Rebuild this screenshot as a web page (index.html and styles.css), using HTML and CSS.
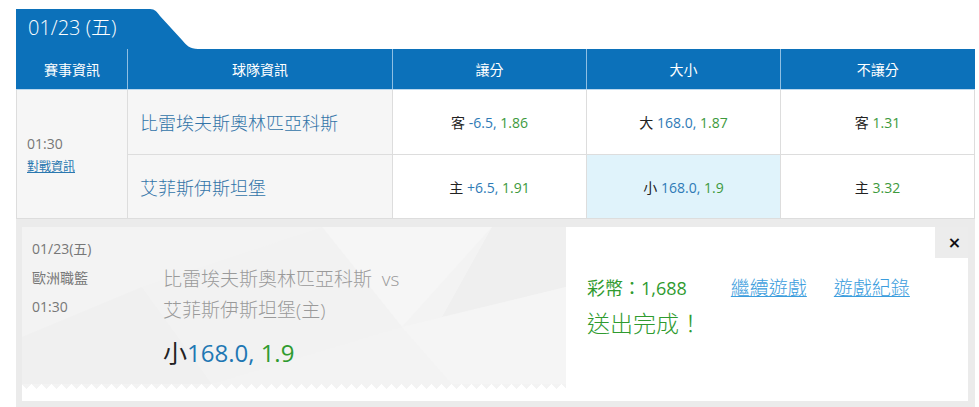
FILE: index.html
```html
<!DOCTYPE html>
<html lang="zh-Hant">
<head>
<meta charset="utf-8">
<title>01/23 (五)</title>
<link rel="stylesheet" href="styles.css">
</head>
<body>
<div class="page">
  <div class="tabrow">
    <div class="tab">01/23 (五)</div>
    <svg class="tab-curve" width="48" height="40" viewBox="0 0 48 40"><path d="M0 0 C5 0 7 3 10 7 L32 31 C36 36 40 40 48 40 H0 Z" fill="#0c71ba"/></svg>
  </div>
  <table class="odds">
    <colgroup>
      <col class="c-info"><col class="c-team"><col class="c-odd"><col class="c-odd"><col class="c-odd">
    </colgroup>
    <thead>
      <tr><th>賽事資訊</th><th>球隊資訊</th><th>讓分</th><th>大小</th><th>不讓分</th></tr>
    </thead>
    <tbody>
      <tr class="r1">
        <td class="info" rowspan="2"><div class="time">01:30</div><a class="vs-link" href="#">對戰資訊</a></td>
        <td class="team">比雷埃夫斯奧林匹亞科斯</td>
        <td class="odd">客 <span class="num">-6.5,</span> <span class="val">1.86</span></td>
        <td class="odd">大 <span class="num">168.0,</span> <span class="val">1.87</span></td>
        <td class="odd">客 <span class="val">1.31</span></td>
      </tr>
      <tr class="r2">
        <td class="team">艾菲斯伊斯坦堡</td>
        <td class="odd">主 <span class="num">+6.5,</span> <span class="val">1.91</span></td>
        <td class="odd sel">小 <span class="num">168.0,</span> <span class="val">1.9</span></td>
        <td class="odd">主 <span class="val">3.32</span></td>
      </tr>
    </tbody>
  </table>
  <div class="panel">
    <div class="slip">
      <div class="ticket">
        <svg class="deco" width="544" height="157" viewBox="0 0 544 157">
          <polygon points="300,0 470,0 380,100" fill="#f6f6f6"/>
          <polygon points="470,0 544,0 544,60 420,90" fill="#efefef"/>
          <polygon points="380,100 544,60 544,157 430,157" fill="#f5f5f5"/>
          <polygon points="0,110 120,60 190,157 0,157" fill="#f0f0f0"/>
          <polygon points="120,60 300,0 380,100 190,157" fill="#f2f2f2"/>
        </svg>
        <div class="meta">
          <div>01/23(五)</div>
          <div class="league">歐洲職籃</div>
          <div>01:30</div>
        </div>
        <div class="bet">
          <div class="teams">比雷埃夫斯奧林匹亞科斯&nbsp; vs<br>艾菲斯伊斯坦堡(主)</div>
          <div class="pick">小<span class="num">168.0,</span> <span class="val">1.9</span></div>
        </div>
      </div>
      <div class="result">
        <div class="line1"><span class="coins">彩幣：1,688</span><a class="act first" href="#">繼續遊戲</a><a class="act" href="#">遊戲紀錄</a></div>
        <div class="done">送出完成！</div>
      </div>
      <button class="close" type="button">×</button>
    </div>
  </div>
</div>
</body>
</html>
```

FILE: styles.css
```css
html, body {
  margin: 0;
  padding: 0;
  background: #fff;
}
body {
  font-family: "Open Sans", "Noto Sans CJK TC", sans-serif;
  color: #222;
}
.page {
  padding: 9px 0 0 16px;
  width: 959px;
}
.tabrow {
  display: flex;
  align-items: flex-end;
  height: 40px;
}
.tab {
  width: 122px;
  height: 40px;
  padding-left: 12px;
  background: #0c71ba;
  color: #fff;
  font-size: 20px;
  font-weight: 300;
  line-height: 38px;
}
.tab-curve {
  display: block;
}
.odds {
  width: 959px;
  border-collapse: collapse;
  table-layout: fixed;
}
.c-info { width: 111px; }
.c-team { width: 265px; }
.c-odd { width: 194px; }
.odds th {
  height: 40px;
  padding: 0;
  background: #0c71ba;
  color: #fff;
  font-weight: 400;
  font-size: 14px;
  border-left: 1px solid #8fbfe3;
  border-bottom: 1px solid #bcd8ee;
}
.odds th:first-child {
  border-left: 1px solid #0c71ba;
}
.odds td {
  padding: 0;
  border: 1px solid #dddddd;
}
.odds .r1 td { height: 64px; }
.odds .r2 td { height: 63px; }
.info {
  background: #f6f6f6;
  padding-left: 10px !important;
  vertical-align: middle;
}
.time {
  color: #777;
  font-size: 14px;
  line-height: 20px;
  margin-top: 2px;
}
.vs-link {
  display: inline-block;
  margin-top: 2px;
  font-size: 12px;
  line-height: 16px;
  color: #2a78b0;
}
.team {
  background: #f6f6f6;
  padding-left: 12px !important;
  color: #3274a8;
  font-size: 18px;
  font-weight: 300;
}
.odd {
  text-align: center;
  font-size: 14px;
  color: #222;
}
.odd.sel {
  background: #e0f3fb;
}
.num {
  color: #2e7ab6;
}
.val {
  color: #3d9a3d;
}
.panel {
  background: #ebebeb;
  padding: 8px 7px 7px 6px;
}
.slip {
  position: relative;
  display: flex;
  height: 174px;
  background: #fff;
}
.ticket {
  position: relative;
  display: flex;
  width: 544px;
  height: 157px;
  background: #f3f3f3;
}
.ticket::after {
  content: "";
  position: absolute;
  left: 0;
  right: 0;
  top: 100%;
  height: 6px;
  background:
    linear-gradient(135deg, #f3f3f3 25%, transparent 25%) -5px 0,
    linear-gradient(225deg, #f3f3f3 25%, transparent 25%) -5px 0;
  background-size: 10px 10px;
  background-repeat: repeat-x;
}
.deco {
  position: absolute;
  left: 0;
  top: 0;
}
.meta {
  position: relative;
  width: 131px;
  padding: 7px 0 0 10px;
  color: #777;
  font-size: 14px;
  line-height: 29px;
}
.bet {
  position: relative;
  padding-top: 37px;
}
.teams {
  color: #9a9a9a;
  font-size: 19px;
  font-weight: 300;
  line-height: 31px;
}
.pick {
  margin-top: 7px;
  font-size: 24px;
  line-height: 40px;
  color: #222;
}
.pick .num { color: #1f78b4; }
.pick .val { color: #2f9b2f; }
.result {
  padding: 46px 0 0 21px;
}
.line1 {
  font-size: 18px;
  line-height: 30px;
  white-space: nowrap;
}
.coins {
  color: #2f9b2f;
}
.act {
  color: #3b9ddd;
  text-decoration: underline;
  font-size: 19px;
  font-weight: 300;
}
.act.first {
  margin-left: 44px;
}
.act + .act {
  margin-left: 27px;
}
.done {
  margin-top: 2px;
  color: #2f9b2f;
  font-size: 23px;
  font-weight: 300;
  line-height: 36px;
}
.close {
  position: absolute;
  right: 0;
  top: 0;
  width: 33px;
  height: 31px;
  padding: 0 0 0 6px;
  border: 0;
  background: #ececec;
  color: #111;
  font-family: "DejaVu Sans", sans-serif;
  font-weight: 700;
  font-size: 16px;
  line-height: 26px;
  cursor: pointer;
}
```
